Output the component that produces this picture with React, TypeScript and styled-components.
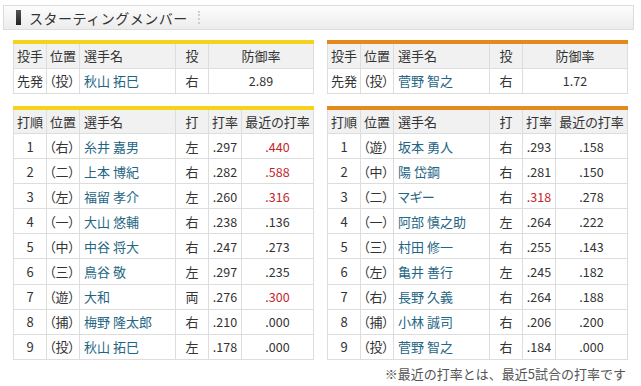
import styled, { createGlobalStyle } from "styled-components";

const GlobalStyle = createGlobalStyle`
  body {
    margin: 0;
    background: #fff;
    font-family: "Noto Sans CJK JP", "Noto Sans", sans-serif;
    color: #333;
  }
`;

const Page = styled.div`
  width: 641px;
  height: 386px;
  padding: 5px 7px 0 3px;
  box-sizing: border-box;
  overflow: hidden;
`;

const Heading = styled.div`
  height: 25px;
  box-sizing: border-box;
  border: 1px solid #dcdcdc;
  background: linear-gradient(#fdfdfd, #ececec);
  display: flex;
  align-items: center;
  padding-left: 12px;
  gap: 8px;
`;

const HeadMark = styled.span`
  width: 5px;
  height: 15px;
  background: linear-gradient(#555, #222);
`;

const HeadText = styled.h2`
  margin: 0;
  font-size: 14px;
  font-weight: 400;
  color: #333;
  letter-spacing: 0.5px;
`;

const HeadDots = styled.span`
  height: 13px;
  border-left: 2px dotted #d0d0d0;
  margin-left: 2px;
`;

const Columns = styled.div`
  display: grid;
  grid-template-columns: 300px 300px;
  column-gap: 14px;
  padding-left: 10px;
  margin-top: 10px;
`;

const Side = styled.div`
  display: flex;
  flex-direction: column;
  gap: 12px;
`;

const Table = styled.table<{ $accent: string }>`
  width: 300px;
  border-collapse: collapse;
  table-layout: fixed;
  border-top: 4px solid ${(p) => p.$accent};
  font-size: 13px;
  font-feature-settings: "palt";
  td, th {
    border: 1px solid #dddddd;
    padding: 0;
    font-weight: 400;
    white-space: nowrap;
    overflow: hidden;
  }
`;

const HeadRow = styled.tr`
  height: 26px;
  background: #f1f1f1;
  th {
    text-align: center;
    color: #333;
  }
`;

const BodyRow = styled.tr<{ $h?: number }>`
  height: ${(p) => p.$h || 25.1}px;
  background: #fff;
`;

const Cell = styled.td<{ $align?: string; $pad?: number }>`
  text-align: ${(p) => p.$align || "center"};
  padding-left: ${(p) => p.$pad || 0}px !important;
  color: #333;
`;

const NameTh = styled.th`
  text-align: left !important;
  padding-left: 4px !important;
`;

const Name = styled.td`
  text-align: left;
  padding-left: 4px !important;
  color: #1f6684;
`;

const Num = styled.td<{ $hot?: boolean }>`
  text-align: center;
  color: ${(p) => (p.$hot ? "#c4262b" : "#333")};
  font-size: 12.5px;
`;

const Note = styled.p`
  margin: 4px 0 0;
  text-align: right;
  font-size: 13px;
  color: #555;
  padding-right: 8px;
`;

type Batter = [string, string, string, string, string, string];

const tigers: Batter[] = [
  ["1", "（右）", "糸井 嘉男", "左", ".297", ".440"],
  ["2", "（二）", "上本 博紀", "右", ".282", ".588"],
  ["3", "（左）", "福留 孝介", "左", ".260", ".316"],
  ["4", "（一）", "大山 悠輔", "右", ".238", ".136"],
  ["5", "（中）", "中谷 将大", "右", ".247", ".273"],
  ["6", "（三）", "鳥谷 敬", "左", ".297", ".235"],
  ["7", "（遊）", "大和", "両", ".276", ".300"],
  ["8", "（捕）", "梅野 隆太郎", "右", ".210", ".000"],
  ["9", "（投）", "秋山 拓巳", "左", ".178", ".000"],
];

const giants: Batter[] = [
  ["1", "（遊）", "坂本 勇人", "右", ".293", ".158"],
  ["2", "（中）", "陽 岱鋼", "右", ".281", ".150"],
  ["3", "（二）", "マギー", "右", ".318", ".278"],
  ["4", "（一）", "阿部 慎之助", "左", ".264", ".222"],
  ["5", "（三）", "村田 修一", "右", ".255", ".143"],
  ["6", "（左）", "亀井 善行", "左", ".245", ".182"],
  ["7", "（右）", "長野 久義", "右", ".264", ".188"],
  ["8", "（捕）", "小林 誠司", "右", ".206", ".200"],
  ["9", "（投）", "菅野 智之", "右", ".184", ".000"],
];

const isHot = (v: string) => parseFloat(v) >= 0.3;

const Cols = () => (
  <colgroup>
    <col style={{ width: 33 }} />
    <col style={{ width: 33 }} />
    <col style={{ width: 96 }} />
    <col style={{ width: 33 }} />
    <col style={{ width: 33 }} />
    <col style={{ width: 72 }} />
  </colgroup>
);

function PitcherTable({ accent, name, era }: { accent: string; name: string; era: string }) {
  return (
    <Table $accent={accent}>
      <Cols />
      <thead>
        <HeadRow>
          <th>投手</th>
          <th>位置</th>
          <NameTh>選手名</NameTh>
          <th>投</th>
          <th colSpan={2}>防御率</th>
        </HeadRow>
      </thead>
      <tbody>
        <BodyRow $h={25}>
          <Cell>先発</Cell>
          <Cell $align="left" $pad={2}>（投）</Cell>
          <Name>{name}</Name>
          <Cell>右</Cell>
          <Num colSpan={2}>{era}</Num>
        </BodyRow>
      </tbody>
    </Table>
  );
}

function LineupTable({ accent, rows }: { accent: string; rows: Batter[] }) {
  return (
    <Table $accent={accent}>
      <Cols />
      <thead>
        <HeadRow>
          <th>打順</th>
          <th>位置</th>
          <NameTh>選手名</NameTh>
          <th>打</th>
          <th>打率</th>
          <th>最近の打率</th>
        </HeadRow>
      </thead>
      <tbody>
        {rows.map((r) => (
          <BodyRow key={r[0]}>
            <Cell>{r[0]}</Cell>
            <Cell $align="left" $pad={2}>{r[1]}</Cell>
            <Name>{r[2]}</Name>
            <Cell>{r[3]}</Cell>
            <Num $hot={isHot(r[4])}>{r[4]}</Num>
            <Num $hot={isHot(r[5])}>{r[5]}</Num>
          </BodyRow>
        ))}
      </tbody>
    </Table>
  );
}

export default function App() {
  return (
    <Page>
      <GlobalStyle />
      <Heading>
        <HeadMark />
        <HeadText>スターティングメンバー</HeadText>
        <HeadDots />
      </Heading>
      <Columns>
        <Side>
          <PitcherTable accent="#f6d21d" name="秋山 拓巳" era="2.89" />
          <LineupTable accent="#f6d21d" rows={tigers} />
        </Side>
        <Side>
          <PitcherTable accent="#e5891b" name="菅野 智之" era="1.72" />
          <LineupTable accent="#e5891b" rows={giants} />
        </Side>
      </Columns>
      <Note>※最近の打率とは、最近5試合の打率です</Note>
    </Page>
  );
}
